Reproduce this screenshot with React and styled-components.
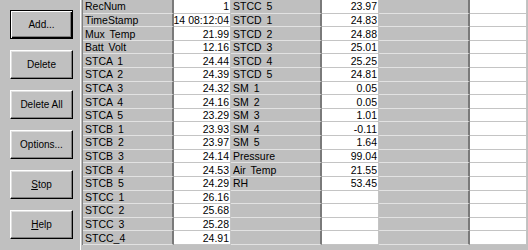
import React from 'react';
import styled, { createGlobalStyle } from 'styled-components';

const GlobalStyle = createGlobalStyle`
  html, body {
    margin: 0;
    padding: 0;
    background: #c0c0c0;
  }
  body {
    font-family: "Liberation Sans", Arial, sans-serif;
  }
`;

const Window = styled.div`
  display: flex;
  width: 528px;
  height: 250px;
  background: #c0c0c0;
  overflow: hidden;
`;

const Sidebar = styled.div`
  flex: none;
  box-sizing: border-box;
  width: 81px;
  padding: 10px 0 0 10px;
  margin-right: 1px;
  display: flex;
  flex-direction: column;
  gap: 11px;
  border-right: 1px solid #ffffff;
`;

const Button = styled.button`
  width: 63px;
  height: 29px;
  padding: 0;
  margin: 0;
  background: #c0c0c0;
  color: #000;
  font-family: "Liberation Sans", Arial, sans-serif;
  font-size: 10px;
  border: 1px solid;
  border-color: ${p => (p.$default ? '#000' : '#fff #000 #000 #fff')};
  box-shadow: ${p =>
    p.$default
      ? 'inset 1px 1px #fff, inset -1px -1px #000, inset -2px -2px #808080'
      : 'inset -1px -1px #808080, inset 1px 1px #dfdfdf'};
  border-radius: 0;
  cursor: default;

  u {
    text-decoration: underline;
  }
`;

const Grid = styled.div`
  flex: none;
  height: 245px;
  border-left: 1px solid #808080;
  display: grid;
  grid-template-columns: repeat(3, 91px 57px);
  grid-template-rows: repeat(18, 1fr);
`;

const Cell = styled.div`
  box-sizing: border-box;
  display: flex;
  align-items: center;
  overflow: hidden;
  white-space: nowrap;
  font-size: 10.5px;
  color: #000;
  min-height: 0;
`;

const Label = styled(Cell)`
  background: #bfbfbf;
  padding-left: 2px;
  word-spacing: 2px;
  border-bottom: 1px solid #e2e2e2;
  border-right: 2px solid #7a7a7a;
`;

const Value = styled(Cell)`
  background: #fff;
  justify-content: flex-end;
  padding-right: 1px;
  border-bottom: 1px solid #c4c4c4;
  border-right: 1px solid #c4c4c4;
`;

const groups = [
  [
    ['RecNum', '1'],
    ['TimeStamp', '14 08:12:04'],
    ['Mux Temp', '21.99'],
    ['Batt Volt', '12.16'],
    ['STCA 1', '24.44'],
    ['STCA 2', '24.39'],
    ['STCA 3', '24.32'],
    ['STCA 4', '24.16'],
    ['STCA 5', '23.29'],
    ['STCB 1', '23.93'],
    ['STCB 2', '23.97'],
    ['STCB 3', '24.14'],
    ['STCB 4', '24.53'],
    ['STCB 5', '24.29'],
    ['STCC 1', '26.16'],
    ['STCC 2', '25.68'],
    ['STCC 3', '25.28'],
    ['STCC_4', '24.91'],
  ],
  [
    ['STCC 5', '23.97'],
    ['STCD 1', '24.83'],
    ['STCD 2', '24.88'],
    ['STCD 3', '25.01'],
    ['STCD 4', '25.25'],
    ['STCD 5', '24.81'],
    ['SM 1', '0.05'],
    ['SM 2', '0.05'],
    ['SM 3', '1.01'],
    ['SM 4', '-0.11'],
    ['SM 5', '1.64'],
    ['Pressure', '99.04'],
    ['Air Temp', '21.55'],
    ['RH', '53.45'],
  ],
  [],
];

const ROWS = 18;

export default function App() {
  const cells = [];
  for (let r = 0; r < ROWS; r++) {
    groups.forEach((g, gi) => {
      const item = g[r] || ['', ''];
      cells.push(<Label key={`l${r}-${gi}`}>{item[0]}</Label>);
      cells.push(<Value key={`v${r}-${gi}`}>{item[1]}</Value>);
    });
  }

  return (
    <>
      <GlobalStyle />
      <Window>
        <Sidebar>
          <Button $default>Add...</Button>
          <Button>Delete</Button>
          <Button>Delete All</Button>
          <Button>Options...</Button>
          <Button><u>S</u>top</Button>
          <Button><u>H</u>elp</Button>
        </Sidebar>
        <Grid>{cells}</Grid>
      </Window>
    </>
  );
}
